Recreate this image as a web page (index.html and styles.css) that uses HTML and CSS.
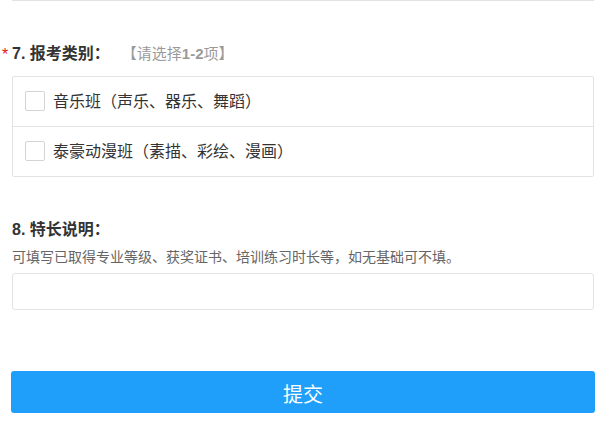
FILE: index.html
```html
<!DOCTYPE html>
<html lang="zh-CN">
<head>
<meta charset="utf-8">
<title>报名表</title>
<link rel="stylesheet" href="styles.css">
</head>
<body>
<div class="page">
  <div class="prev-field"></div>

  <section class="q q7">
    <div class="q-title"><span class="req">*</span><span class="q-text">7. 报考类别：</span><span class="hint">【请选择<b>1-2</b>项】</span></div>
    <div class="options">
      <label class="opt"><span class="box"></span><span class="opt-text">音乐班（声乐、器乐、舞蹈）</span></label>
      <label class="opt"><span class="box"></span><span class="opt-text">泰豪动漫班（素描、彩绘、漫画）</span></label>
    </div>
  </section>

  <section class="q q8">
    <div class="q-title"><span class="q-text">8. 特长说明：</span></div>
    <p class="desc">可填写已取得专业等级、获奖证书、培训练习时长等，如无基础可不填。</p>
    <div class="input"></div>
  </section>

  <button class="submit" type="button">提交</button>
</div>
</body>
</html>
```

FILE: styles.css
```css
html, body {
  margin: 0;
  padding: 0;
  background: #ffffff;
}

body {
  font-family: "Liberation Sans", "Noto Sans CJK SC", sans-serif;
  color: #333333;
}

.page {
  width: 582px;
  padding-left: 12px;
  display: flex;
  flex-direction: column;
}

.prev-field {
  height: 0;
  border-bottom: 1px solid #e3e3e3;
}

.q-title {
  display: flex;
  align-items: center;
  height: 24px;
  line-height: 24px;
  font-size: 16px;
  font-weight: bold;
  color: #333333;
  white-space: nowrap;
}

.q7 .q-title {
  margin-top: 41px;
  margin-left: -10px;
}

.req {
  width: 10px;
  color: #e02020;
  font-size: 16px;
  font-weight: normal;
  padding-top: 2px;
}

.hint {
  margin-left: 12px;
  font-size: 15px;
  font-weight: normal;
  color: #9a9a9a;
}

.hint b {
  font-weight: bold;
}

.options {
  margin-top: 10px;
  border: 1px solid #e3e3e3;
  border-radius: 2px;
  display: flex;
  flex-direction: column;
}

.opt {
  height: 49px;
  display: flex;
  align-items: center;
  padding-left: 12px;
  gap: 8px;
}

.opt + .opt {
  border-top: 1px solid #e3e3e3;
}

.box {
  width: 18px;
  height: 18px;
  border: 1px solid #d4d4d4;
  border-radius: 2px;
  background: #fff;
  margin-top: -2px;
}

.opt-text {
  font-size: 16px;
  color: #333333;
  line-height: 20px;
}

.q8 .q-title {
  margin-top: 41px;
}

.desc {
  margin: 5px 0 0;
  font-size: 14px;
  line-height: 20px;
  color: #666666;
  white-space: nowrap;
}

.input {
  margin-top: 6px;
  height: 37px;
  box-sizing: border-box;
  border: 1px solid #e3e3e3;
  border-radius: 3px;
}

.submit {
  margin: 61px -1px 0;
  height: 42px;
  border: none;
  border-radius: 3px;
  background: #1f9ff9;
  color: #ffffff;
  font-family: "Liberation Sans", "Noto Sans CJK SC", sans-serif;
  font-size: 20px;
  line-height: 42px;
  padding: 3px 0 0;
}
```
